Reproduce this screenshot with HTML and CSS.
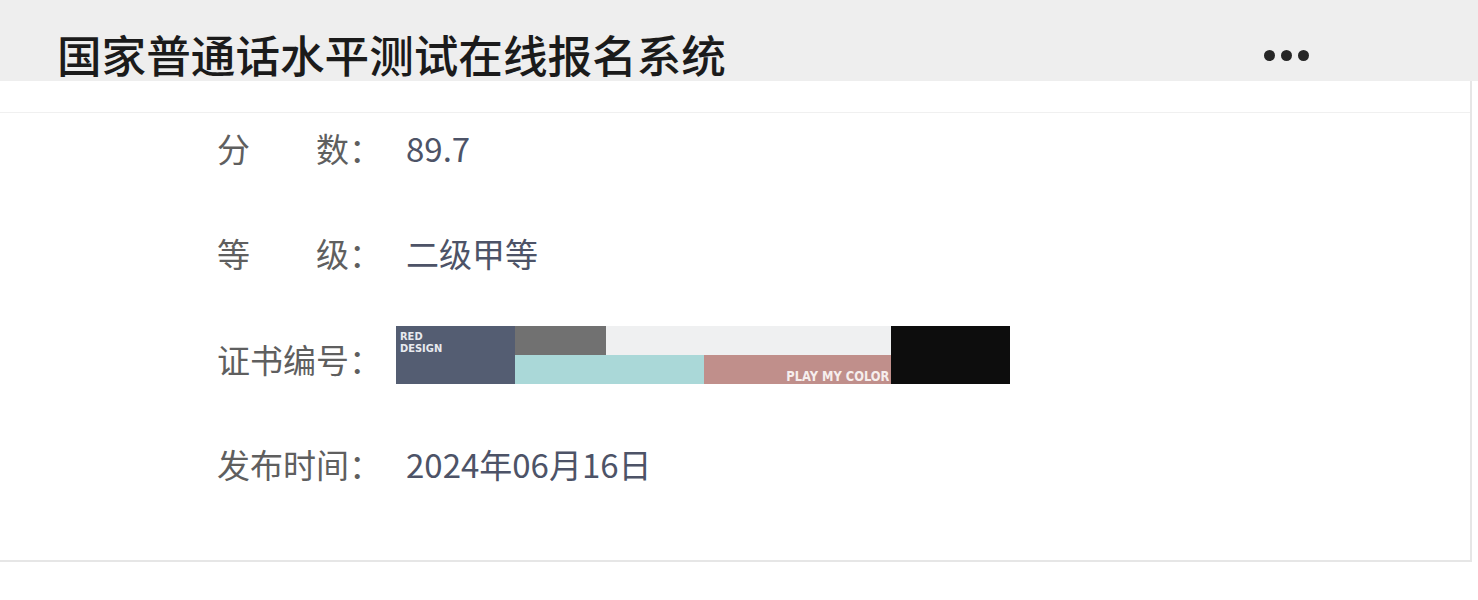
FILE: index.html
```html
<!DOCTYPE html>
<html lang="zh-CN">
<head>
<meta charset="utf-8">
<title>国家普通话水平测试在线报名系统</title>
<link rel="stylesheet" href="styles.css">
</head>
<body>
<header class="topbar">
  <h1 class="title">国家普通话水平测试在线报名系统</h1>
  <div class="more" aria-label="更多"><span></span><span></span><span></span></div>
</header>
<main class="card">
  <div class="card-top"></div>
  <div class="rows">
    <div class="row">
      <span class="label"><span class="label-text">分数</span>：</span>
      <span class="value">89.7</span>
    </div>
    <div class="row">
      <span class="label"><span class="label-text">等级</span>：</span>
      <span class="value">二级甲等</span>
    </div>
    <div class="row">
      <span class="label"><span class="label-text">证书编号</span>：</span>
      <div class="palette">
        <div class="sw sw-slate"><span class="brand">RED<br>DESIGN</span></div>
        <div class="sw sw-gray"></div>
        <div class="sw sw-light"></div>
        <div class="sw sw-teal"></div>
        <div class="sw sw-rose"><span class="tag">PLAY MY COLOR</span></div>
        <div class="sw sw-black"></div>
      </div>
    </div>
    <div class="row">
      <span class="label"><span class="label-text">发布时间</span>：</span>
      <span class="value">2024年06月16日</span>
    </div>
  </div>
</main>
</body>
</html>
```

FILE: styles.css
```css
html, body {
  margin: 0;
  padding: 0;
  background: #ffffff;
}
body {
  font-family: "Noto Sans CJK SC", "Noto Sans", sans-serif;
  width: 1478px;
  height: 600px;
  overflow: hidden;
}
.topbar {
  height: 81px;
  background: #eeeeee;
  display: flex;
  align-items: flex-start;
  justify-content: space-between;
  padding-left: 57px;
  padding-right: 169px;
  box-sizing: border-box;
}
.title {
  margin: 0;
  padding-top: 30px;
  font-size: 44.6px;
  line-height: 48px;
  font-weight: 500;
  color: #1b1b1b;
  white-space: nowrap;
}
.more {
  display: flex;
  gap: 6px;
  padding-top: 50px;
}
.more span {
  width: 11px;
  height: 11px;
  border-radius: 50%;
  background: #262626;
}
.card {
  width: 1472px;
  box-sizing: border-box;
  border-right: 2px solid #e6e6e6;
  border-bottom: 2px solid #e6e6e6;
  background: #ffffff;
}
.card-top {
  height: 31px;
  border-bottom: 1px solid #f0f0f0;
}
.rows {
  display: flex;
  flex-direction: column;
  gap: 57.3px;
  padding: 11px 0 72px 217px;
}
.row {
  display: flex;
  align-items: center;
  height: 48px;
  font-size: 33px;
  line-height: 48px;
}
.label {
  display: flex;
  width: 179px;
  color: #5f5f5f;
}
.label-text {
  width: 4em;
  text-align: justify;
  text-align-last: justify;
}
.value {
  color: #4d5367;
  padding-left: 10px;
}
.palette {
  margin-top: -8px;
  width: 614px;
  height: 58px;
  display: grid;
  grid-template-columns: 119px 91px 98px 187px 119px;
  grid-template-rows: 29px 29px;
}
.sw-slate { grid-column: 1; grid-row: 1 / 3; background: #545d72; }
.sw-gray { grid-column: 2; grid-row: 1; background: #717171; }
.sw-light { grid-column: 3 / 5; grid-row: 1; background: #eff0f1; }
.sw-teal { grid-column: 2 / 4; grid-row: 2; background: #aad8d8; }
.sw-rose { grid-column: 4; grid-row: 2; background: #c08f8b; display: flex; align-items: flex-end; justify-content: flex-end; overflow: hidden; }
.sw-black { grid-column: 5; grid-row: 1 / 3; background: #0d0d0d; }
.brand {
  display: block;
  padding: 5px 0 0 4px;
  font-family: "DejaVu Sans Condensed", "Liberation Sans", sans-serif;
  font-weight: 700;
  font-size: 11px;
  line-height: 12px;
  color: #e8eaef;
}
.tag {
  display: block;
  font-family: "DejaVu Sans Condensed", "Liberation Sans", sans-serif;
  font-weight: 700;
  font-size: 14.5px;
  line-height: 15px;
  color: #f6eeed;
  padding-right: 2px;
  white-space: nowrap;
  transform: scaleX(0.88);
  transform-origin: right bottom;
}
```
